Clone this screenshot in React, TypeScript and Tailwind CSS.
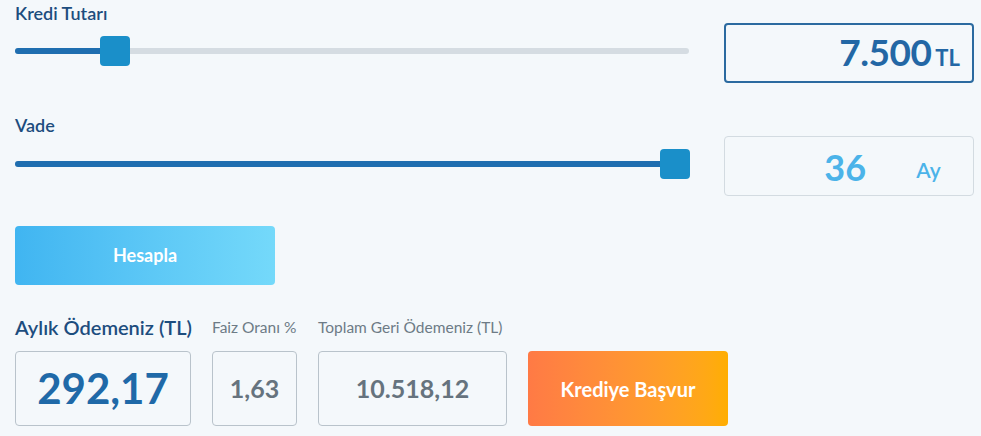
import React from "react";

function Slider({ pct, thumbLeft }: { pct: number; thumbLeft: number }) {
  return (
    <div className="relative h-[30px] flex items-center">
      <div className="h-[6px] w-full rounded-full bg-[#d5dce2] overflow-hidden">
        <div className="h-full bg-[#1f6eb0]" style={{ width: `${pct}%` }} />
      </div>
      <div
        className="absolute top-0 w-[30px] h-[30px] rounded-[4px] bg-[#1a8fc9]"
        style={{ left: thumbLeft }}
      />
    </div>
  );
}

export default function App() {
  return (
    <div
      className="w-[981px] h-[436px] bg-[#f4f8fb] overflow-hidden pl-[15px] pr-[7px]"
      style={{ fontFamily: "Lato, 'Noto Sans', sans-serif" }}
    >
      <div className="flex gap-[35px]">
        <div className="w-[675px]">
          <div className="text-[18px] font-semibold text-[#1d4d7e] leading-[20px] pt-[3px]">Kredi Tutarı</div>
          <div className="mt-[13px]">
            <Slider pct={13} thumbLeft={85} />
          </div>
        </div>
        <div className="mt-[23px] w-[250px] h-[60px] border-2 border-[#2b6aa0] rounded-[4px] flex items-baseline justify-end pr-[12px] pt-[6px]">
          <span className="text-[37px] font-bold text-[#2367a5] leading-[42px] tracking-[-0.5px]">7.500</span>
          <span className="text-[22px] font-bold text-[#2367a5] ml-[4px]">TL</span>
        </div>
      </div>

      <div className="flex gap-[35px] mt-[29px]">
        <div className="w-[675px]">
          <div className="text-[18px] font-semibold text-[#1d4d7e] leading-[20px] pt-[3px]">Vade</div>
          <div className="mt-[14px]">
            <Slider pct={97.8} thumbLeft={645} />
          </div>
        </div>
        <div className="mt-[24px] w-[250px] h-[60px] border border-[#d3dbe1] rounded-[4px] relative">
          <span className="absolute left-[99px] top-[10px] text-[36px] font-bold text-[#4bb3e9] leading-[40px]">36</span>
          <span className="absolute left-[191px] top-[20px] text-[21px] font-semibold text-[#4bb3e9] leading-[26px]">Ay</span>
        </div>
      </div>

      <button className="mt-[30px] w-[260px] h-[59px] rounded-[4px] bg-gradient-to-r from-[#40b5f1] to-[#74d9fa] text-white text-[18px] font-bold flex items-center justify-center">
        Hesapla
      </button>

      <div className="flex items-end gap-[21px] mt-[30px]">
        <div className="w-[176px]">
          <div className="text-[20px] font-semibold text-[#1d4d7e] leading-[24px] whitespace-nowrap">Aylık Ödemeniz (TL)</div>
          <div className="mt-[12px] h-[75px] border border-[#b9c3cb] rounded-[4px] flex items-center justify-center text-[42px] font-bold text-[#1f69a8]">292,17</div>
        </div>
        <div className="w-[85px]">
          <div className="text-[15.5px] text-[#6d7b86] leading-[20px] whitespace-nowrap">Faiz Oranı %</div>
          <div className="mt-[14px] h-[75px] border border-[#b9c3cb] rounded-[4px] flex items-center justify-center text-[25px] font-bold text-[#66737e]">1,63</div>
        </div>
        <div className="w-[189px]">
          <div className="text-[15.5px] text-[#6d7b86] leading-[20px] whitespace-nowrap">Toplam Geri Ödemeniz (TL)</div>
          <div className="mt-[14px] h-[75px] border border-[#b9c3cb] rounded-[4px] flex items-center justify-center text-[25px] font-bold text-[#66737e]">10.518,12</div>
        </div>
        <button className="w-[200px] h-[75px] rounded-[4px] bg-gradient-to-r from-[#ff7a45] to-[#ffae00] text-white text-[20px] font-bold flex items-center justify-center">
          Krediye Başvur
        </button>
      </div>
    </div>
  );
}
